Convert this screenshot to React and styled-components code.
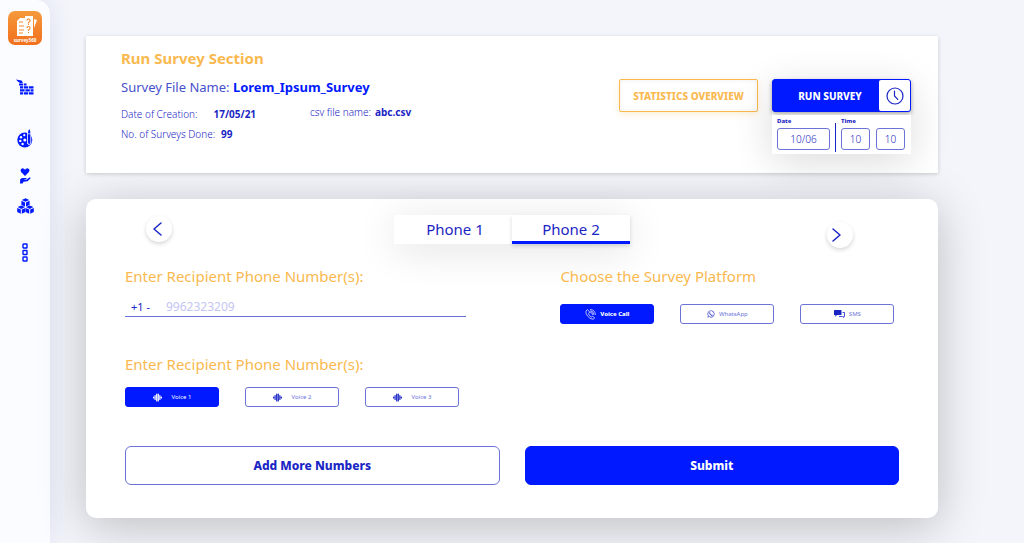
import React, {useState} from 'react';
import styled, {createGlobalStyle, css} from 'styled-components';
import { FaWhatsapp } from 'react-icons/fa';

const blue = '#0019ff';
const ink = '#1a25c4';
const soft = '#4650cc';
const line = '#6b73d6';
const amber = '#f9b94f';

const GlobalStyle = createGlobalStyle`
  *, *:before, *:after {
    box-sizing: border-box;
  }

  body {
    margin: 0;
    background: #f3f5fa;
    color: ${ink};
    font-family: "Noto Sans", "Open Sans", sans-serif;
    font-size: 10px;
  }

  button, input {
    font-family: inherit;
    color: inherit;
  }

  button {
    cursor: pointer;
  }
`;

const Page = styled.div`
  display: flex;
  min-height: 100vh;
  overflow: hidden;
`;

const Sidebar = styled.nav`
  flex: 0 0 50px;
  display: flex;
  flex-direction: column;
  align-items: center;
  padding-top: 11px;
  background: #fbfcff;
  border-top-right-radius: 14px;
  box-shadow: 0 0 24px rgba(60, 80, 180, 0.12);
`;

const SideLink = styled.a`
  display: flex;
  color: ${blue};
  margin-top: ${props => props.$space || 0}px;
`;

const Main = styled.main`
  flex: 1;
  display: flex;
  flex-direction: column;
  gap: 26px;
  padding: 36px 86px 24px 36px;
`;

const SummaryCard = styled.section`
  position: relative;
  z-index: 1;
  display: flex;
  justify-content: space-between;
  min-height: 137px;
  padding: 11px 27px 12px 35px;
  background: white;
  box-shadow: 0 1px 4px rgba(0, 0, 0, 0.18);
`;

const SectionTitle = styled.h1`
  margin: 0;
  font-size: 15px;
  line-height: 22px;
  font-weight: 700;
  color: ${amber};
`;

const FileName = styled.p`
  margin: 8px 0 7px;
  font-size: 13px;
  line-height: 20px;
  color: ${soft};

  & > strong {
    font-weight: 700;
    color: ${blue};
  }
`;

const Facts = styled.div`
  display: flex;
  gap: 54px;
`;

const FactList = styled.div`
  display: flex;
  flex-direction: column;
`;

const Fact = styled.p`
  display: flex;
  gap: ${props => props.$gap}px;
  margin: 0;
  font-size: 10px;
  line-height: ${props => props.$compact ? 16 : 20}px;
  font-weight: 300;

  & > strong {
    font-weight: 700;
    color: ${ink};
  }
`;

const Actions = styled.div`
  display: flex;
  align-items: flex-start;
  gap: 14px;
  padding-top: 32px;
`;

const StatsButton = styled.button`
  width: 139px;
  height: 33px;
  padding: 0;
  border: 1px solid ${amber};
  border-radius: 2px;
  background: white;
  color: ${amber};
  font-size: 10px;
  font-weight: 800;
  box-shadow: 0 2px 6px rgba(249, 185, 79, 0.25), inset 0 0 5px rgba(0, 0, 0, 0.06);
`;

const Scheduler = styled.div`
  display: flex;
  flex-direction: column;
  gap: 3px;
  width: 139px;
  box-shadow: 0 8px 40px rgba(0, 0, 0, 0.14);
`;

const RunGroup = styled.div`
  display: flex;
  height: 33px;
  border: 1px solid ${blue};
  border-radius: 3px;
  background: ${blue};
  box-shadow: 0 2px 4px rgba(0, 0, 0, 0.35);
`;

const RunButton = styled.button`
  flex: 1;
  padding: 0 0 0 8px;
  border: 0;
  background: none;
  color: white;
  font-size: 10px;
  font-weight: 800;
`;

const ClockButton = styled.button`
  display: flex;
  align-items: center;
  justify-content: center;
  width: 31px;
  padding: 0;
  border: 0;
  border-radius: 2px;
  background: white;
`;

const SchedulePanel = styled.div`
  display: flex;
  gap: 5px;
  height: 39px;
  padding: 2px 5px;
  background: white;
`;

const Field = styled.div`
  display: flex;
  flex-direction: column;
  gap: 3px;
`;

const FieldLabel = styled.label`
  font-size: 6px;
  line-height: 8px;
  font-weight: 800;
`;

const FieldInputs = styled.div`
  display: flex;
  gap: 6px;
`;

const SmallInput = styled.input`
  width: ${props => props.$wide ? 53 : 29}px;
  height: 22px;
  padding: 0;
  border: 1px solid ${line};
  border-radius: 3px;
  background: white;
  font-size: 10px;
  font-weight: 300;
  text-align: center;
`;

const Divider = styled.span`
  width: 1px;
  margin-top: 6px;
  background: ${ink};
`;

const SurveyCard = styled.form`
  display: flex;
  flex-direction: column;
  padding: 16px 39px 33px;
  border-radius: 10px;
  background: white;
  box-shadow: 0 8px 48px rgba(0, 0, 0, 0.23);
`;

const PhoneNav = styled.div`
  display: grid;
  grid-template-columns: 1fr auto 1fr;
  align-items: start;
`;

//Round arrow on either side of the phone tabs
const ArrowButton = styled.button`
  display: flex;
  align-items: center;
  justify-content: center;
  width: 26px;
  height: 26px;
  margin: 1px 0 0 21px;
  padding: 0 4px 0 0;
  border: 0;
  border-radius: 50%;
  background: white;
  box-shadow: 0 2px 4px rgba(0, 0, 0, 0.16);

  ${props => props.$next && css`
    justify-self: end;
    margin: 7px 46px 0 0;
    padding-right: 8px;
  `}
`;

const Tabs = styled.div`
  display: flex;
  box-shadow: 0 6px 40px rgba(0, 0, 0, 0.12);
`;

const Tab = styled.button`
  width: 118px;
  height: 29px;
  padding: 2px 0 0 4px;
  border: 0;
  border-bottom: 3px solid white;
  background: white;
  font-size: 15px;
  line-height: 22px;

  ${props => props.$active && css`
    padding-left: 0;
    border-bottom-color: ${blue};
    box-shadow: 0 2px 4px rgba(0, 0, 0, 0.15);
  `}
`;

const Columns = styled.div`
  display: grid;
  grid-template-columns: 9fr 7fr;
  margin-top: 16px;
`;

const Group = styled.fieldset`
  min-width: 0;
  margin: 0 0 35px;
  padding: 0;
  border: 0;
`;

const GroupTitle = styled.legend`
  padding: 0;
  font-size: 15px;
  line-height: 24px;
  font-weight: 400;
  color: ${amber};
`;

const NumberRow = styled.label`
  display: flex;
  align-items: center;
  gap: 16px;
  max-width: 341px;
  height: 20px;
  margin-top: 9px;
  padding-left: 6px;
  border-bottom: 1px solid ${line};
  font-size: 11px;
`;

const NumberInput = styled.input`
  flex: 1;
  min-width: 0;
  padding: 0;
  border: 0;
  outline: 0;
  background: none;
  font-size: 12px;

  &::placeholder {
    color: #c3c5f3;
    opacity: 1;
  }
`;

const Choices = styled.div`
  display: flex;
  gap: 26px;
  margin-top: ${props => props.$space}px;
`;

const Choice = styled.button`
  display: flex;
  align-items: center;
  justify-content: center;
  gap: ${props => props.$gap}px;
  width: 94px;
  height: 20px;
  padding: 0;
  border: 1px solid ${line};
  border-radius: 3px;
  background: white;
  color: ${line};
  font-size: 6px;

  & > svg {
    color: ${ink};
  }

  ${props => props.$active && css`
    border-color: ${blue};
    background: ${blue};
    color: white;
    font-weight: ${props.$strong ? 800 : 400};

    & > svg {
      color: white;
    }
  `}
`;

const Footer = styled.div`
  display: flex;
  gap: 25px;
  margin-top: 4px;
`;

const BigButton = styled.button`
  flex: 1;
  height: 39px;
  border: 1px solid ${line};
  border-radius: 6px;
  background: white;
  color: ${ink};
  font-size: 12px;
  font-weight: 800;

  ${props => props.$primary && css`
    border-color: ${blue};
    background: ${blue};
    color: white;
  `}
`;

const Logo = () => (
  <svg width="34" height="34" viewBox="0 0 34 34" aria-hidden="true">
    <defs>
      <linearGradient id="logo" x1="0" y1="0" x2="0" y2="1">
        <stop offset="0" stopColor="#f59a3c"/>
        <stop offset="1" stopColor="#f26f1d"/>
      </linearGradient>
    </defs>
    <rect width="34" height="34" rx="7" fill="url(#logo)"/>
    <path d="M9 10l3-3h5v18H9z" fill="#fff"/>
    <path d="M17 5h8v20h-8z" fill="#fff"/>
    <path d="M26 8l3 1-3 8z" fill="#fff"/>
    <path d="M11 11h4M11 15h5M11 19h5M11 22h4" stroke="#f28a2e" strokeWidth="1"/>
    <path d="M19 9.500q0-1.500 1.500-1.500t1.500 1.500-1.500 2v1M19 17q0-1.500 1.500-1.500t1.500 1.500-1.500 2v1" fill="none" stroke="#f28a2e" strokeWidth="1.200"/>
    <path d="M20 13.500h1M20 21.500h1" stroke="#f28a2e"/>
    <text x="17" y="30.500" textAnchor="middle" fontSize="4.500" fontWeight="700" fill="#fff">survey360</text>
  </svg>
);

const Bricks = () => (
  <svg width="18" height="16" viewBox="0 0 18 16" fill="currentColor" aria-hidden="true">
    <path d="M0 .5L5.500 1.500l1.500 2-2.500.8L2 2.800zM3 4.600h4v1.900H3zM7.800 4.600h2.700v1.900H7.800z"/>
    <path d="M4 7.200h3v2.200H4zM7.800 7.200h4.400v2.200H7.800zM13 7.200h4.500v2.200H13z"/>
    <path d="M4 10.200h4.600v2.300H4zM9.400 10.200h4.400v2.300H9.400zM14.600 10.200h2.900v2.300h-2.900z"/>
    <path d="M4 13.300h3v2.200H4zM7.800 13.300h4.400v2.200H7.800zM13 13.300h4.500v2.200H13z"/>
  </svg>
);

const Palette = () => (
  <svg width="16" height="19" viewBox="0 0 16 19" aria-hidden="true">
    <circle cx="7.800" cy="11" r="7.500" fill="currentColor"/>
    <g fill="#fbfcff">
      <circle cx="7.300" cy="6.200" r="1.100"/>
      <circle cx="4" cy="8.200" r="1.200"/>
      <circle cx="3.300" cy="11.900" r="1.200"/>
      <circle cx="5.600" cy="15" r="1.200"/>
      <circle cx="7.800" cy="11" r="1.500"/>
      <path d="M10.200 0h4v14l-2 2.500-2-2z"/>
    </g>
    <path d="M12.200 0q1.800 2.500 1.100 4.500h-2.200Q10.700 2 12.200 0zM11 5.300h2.400v8.500l-1.200 2-1.200-2z" fill="currentColor"/>
  </svg>
);

const Care = () => (
  <svg width="12" height="16" viewBox="0 0 12 16" fill="currentColor" aria-hidden="true">
    <path d="M6 8L2.300 4.200Q1 2.500 2.200 1T5 .7l1 1 1-1Q8.500-.2 9.800 1t-.1 3.200z"/>
    <path d="M1.200 11.300Q2.800 9.600 5 10h2.300q.8.700-.3 1.300H5.300v.5H7.500L10.300 9.600q1.300-.5 1.300.6L8.600 13.200 4.500 13.800 3.500 15.500H1z"/>
  </svg>
);

const cube = 'M0 0l3.700-1.700L7.400 0 3.700 1.800zM-.4.800l3.600 1.700v4.200L-.4 5zM7.800.8L4.200 2.500v4.200L7.800 5z';

const Cubes = () => (
  <svg width="17" height="16" viewBox="0 0 17 16" fill="currentColor" aria-hidden="true">
    <path d={cube} transform="translate(4.800 1.900)"/>
    <path d={cube} transform="translate(.6 9.100)"/>
    <path d={cube} transform="translate(9 9.100)"/>
  </svg>
);

const Squares = () => (
  <svg width="6" height="19" viewBox="0 0 6 19" fill="none" stroke="currentColor" strokeWidth="1.400" aria-hidden="true">
    <rect x="1" y="1" width="4" height="4" rx=".5"/>
    <rect x="1" y="7.500" width="4" height="4" rx=".5"/>
    <rect x="1" y="14" width="4" height="4" rx=".5"/>
  </svg>
);

const Clock = () => (
  <svg width="18" height="18" viewBox="0 0 18 18" fill="none" stroke="currentColor" strokeWidth="1.200" strokeLinecap="round" aria-hidden="true">
    <circle cx="9" cy="9" r="8"/>
    <path d="M8.500 4v5l3.300 3.300"/>
  </svg>
);

const Chevron = ({right}) => (
  <svg width="9" height="16" viewBox="0 0 9 16" fill="none" stroke="currentColor" strokeWidth="1.500" strokeLinecap="round" strokeLinejoin="round" aria-hidden="true">
    <path d={right ? 'M1 2l7 6-7 6' : 'M8 2L1 8l7 6'}/>
  </svg>
);

const Wave = () => (
  <svg width="9" height="9" viewBox="0 0 9 9" stroke="currentColor" strokeWidth="1.200" strokeLinecap="round" aria-hidden="true">
    <path d="M.6 4v1M2.100 2.500v4M3.700 1v7M5.300 1v7M6.900 2.500v4M8.400 4v1"/>
  </svg>
);

const VoiceCall = () => (
  <svg width="11" height="11" viewBox="0 0 11 11" fill="none" stroke="currentColor" strokeWidth=".7" strokeLinecap="round" strokeLinejoin="round" aria-hidden="true">
    <path d="M2.200.8L1 2Q.2 4 2.500 7t5.500 3.300l1.700-1.200-2-2L6.300 8Q4.300 7 3.500 4.800l1-1.500z"/>
    <path d="M5.500 3.200q2 .3 2 2.300M5.500 1.800q3.300.3 3.400 3.700M5.500.5q4.700.3 4.900 5"/>
  </svg>
);

const Sms = () => (
  <svg width="11" height="8" viewBox="0 0 11 8" aria-hidden="true">
    <path d="M.5 0h6.500q.5 0 .5.500v4q0 .5-.5.500H3L1.300 6.700V5H.5Q0 5 0 4.500v-4Q0 0 .5 0z" fill="currentColor"/>
    <path d="M8.500 2.500h2v4h-.8v1l-1.200-1H5" fill="none" stroke="currentColor" strokeWidth=".8"/>
  </svg>
);

const sideLinks = [
  { label: 'Home', icon: <Logo/>, space: 0 },
  { label: 'Builder', icon: <Bricks/>, space: 34 },
  { label: 'Design', icon: <Palette/>, space: 34 },
  { label: 'Care', icon: <Care/>, space: 20 },
  { label: 'Modules', icon: <Cubes/>, space: 14 },
  { label: 'More', icon: <Squares/>, space: 29 }
];

const platforms = [
  { name: 'Voice Call', icon: <VoiceCall/> },
  { name: 'WhatsApp', icon: <FaWhatsapp size={8}/> },
  { name: 'SMS', icon: <Sms/> }
];

const voices = ['Voice 1', 'Voice 2', 'Voice 3'];
const phones = ['Phone 1', 'Phone 2'];

const Summary = () => (
  <SummaryCard>
    <div>
      <SectionTitle>Run Survey Section</SectionTitle>
      <FileName>Survey File Name: <strong>Lorem_Ipsum_Survey</strong></FileName>
      <Facts>
        <FactList>
          <Fact $gap={16}>Date of Creation: <strong>17/05/21</strong></Fact>
          <Fact $gap={6}>No. of Surveys Done: <strong>99</strong></Fact>
        </FactList>
        <FactList>
          <Fact $gap={4} $compact>csv file name: <strong>abc.csv</strong></Fact>
        </FactList>
      </Facts>
    </div>
    <Actions>
      <StatsButton type="button">STATISTICS OVERVIEW</StatsButton>
      <Scheduler>
        <RunGroup>
          <RunButton type="button">RUN SURVEY</RunButton>
          <ClockButton type="button" aria-label="Schedule"><Clock/></ClockButton>
        </RunGroup>
        <SchedulePanel>
          <Field>
            <FieldLabel htmlFor="date">Date</FieldLabel>
            <SmallInput id="date" $wide defaultValue="10/06"/>
          </Field>
          <Divider/>
          <Field>
            <FieldLabel htmlFor="hour">Time</FieldLabel>
            <FieldInputs>
              <SmallInput id="hour" defaultValue="10"/>
              <SmallInput aria-label="Minutes" defaultValue="10"/>
            </FieldInputs>
          </Field>
        </SchedulePanel>
      </Scheduler>
    </Actions>
  </SummaryCard>
);

const Survey = () => {

  const [phone, setPhone] = useState(1);
  const [platform, setPlatform] = useState(0);
  const [voice, setVoice] = useState(0);

  return (
    <SurveyCard onSubmit={e => e.preventDefault()}>
      <PhoneNav>
        <ArrowButton type="button" aria-label="Previous phone" onClick={() => setPhone(0)}><Chevron/></ArrowButton>
        <Tabs role="tablist">
          {phones.map((name, i) => (
            <Tab key={name} type="button" role="tab" aria-selected={phone === i} $active={phone === i} onClick={() => setPhone(i)}>{name}</Tab>
          ))}
        </Tabs>
        <ArrowButton type="button" $next aria-label="Next phone" onClick={() => setPhone(1)}><Chevron right/></ArrowButton>
      </PhoneNav>
      <Columns>
        <div>
          <Group>
            <GroupTitle>Enter Recipient Phone Number(s):</GroupTitle>
            <NumberRow>
              <span>+1 -</span>
              <NumberInput type="tel" placeholder="9962323209"/>
            </NumberRow>
          </Group>
          <Group>
            <GroupTitle>Enter Recipient Phone Number(s):</GroupTitle>
            <Choices $space={11}>
              {voices.map((name, i) => (
                <Choice key={name} type="button" $gap={10} $active={voice === i} onClick={() => setVoice(i)}>
                  <Wave/>{name}
                </Choice>
              ))}
            </Choices>
          </Group>
        </div>
        <Group>
          <GroupTitle>Choose the Survey Platform</GroupTitle>
          <Choices $space={16}>
            {platforms.map(({name, icon}, i) => (
              <Choice key={name} type="button" $gap={4} $strong $active={platform === i} onClick={() => setPlatform(i)}>
                {icon}{name}
              </Choice>
            ))}
          </Choices>
        </Group>
      </Columns>
      <Footer>
        <BigButton type="button">Add More Numbers</BigButton>
        <BigButton type="submit" $primary>Submit</BigButton>
      </Footer>
    </SurveyCard>
  );
}

const App = () => (
  <>
    <GlobalStyle/>
    <Page>
      <Sidebar>
        {sideLinks.map(({label, icon, space}) => (
          <SideLink key={label} href="#" aria-label={label} $space={space}>{icon}</SideLink>
        ))}
      </Sidebar>
      <Main>
        <Summary/>
        <Survey/>
      </Main>
    </Page>
  </>
);

export default App;
